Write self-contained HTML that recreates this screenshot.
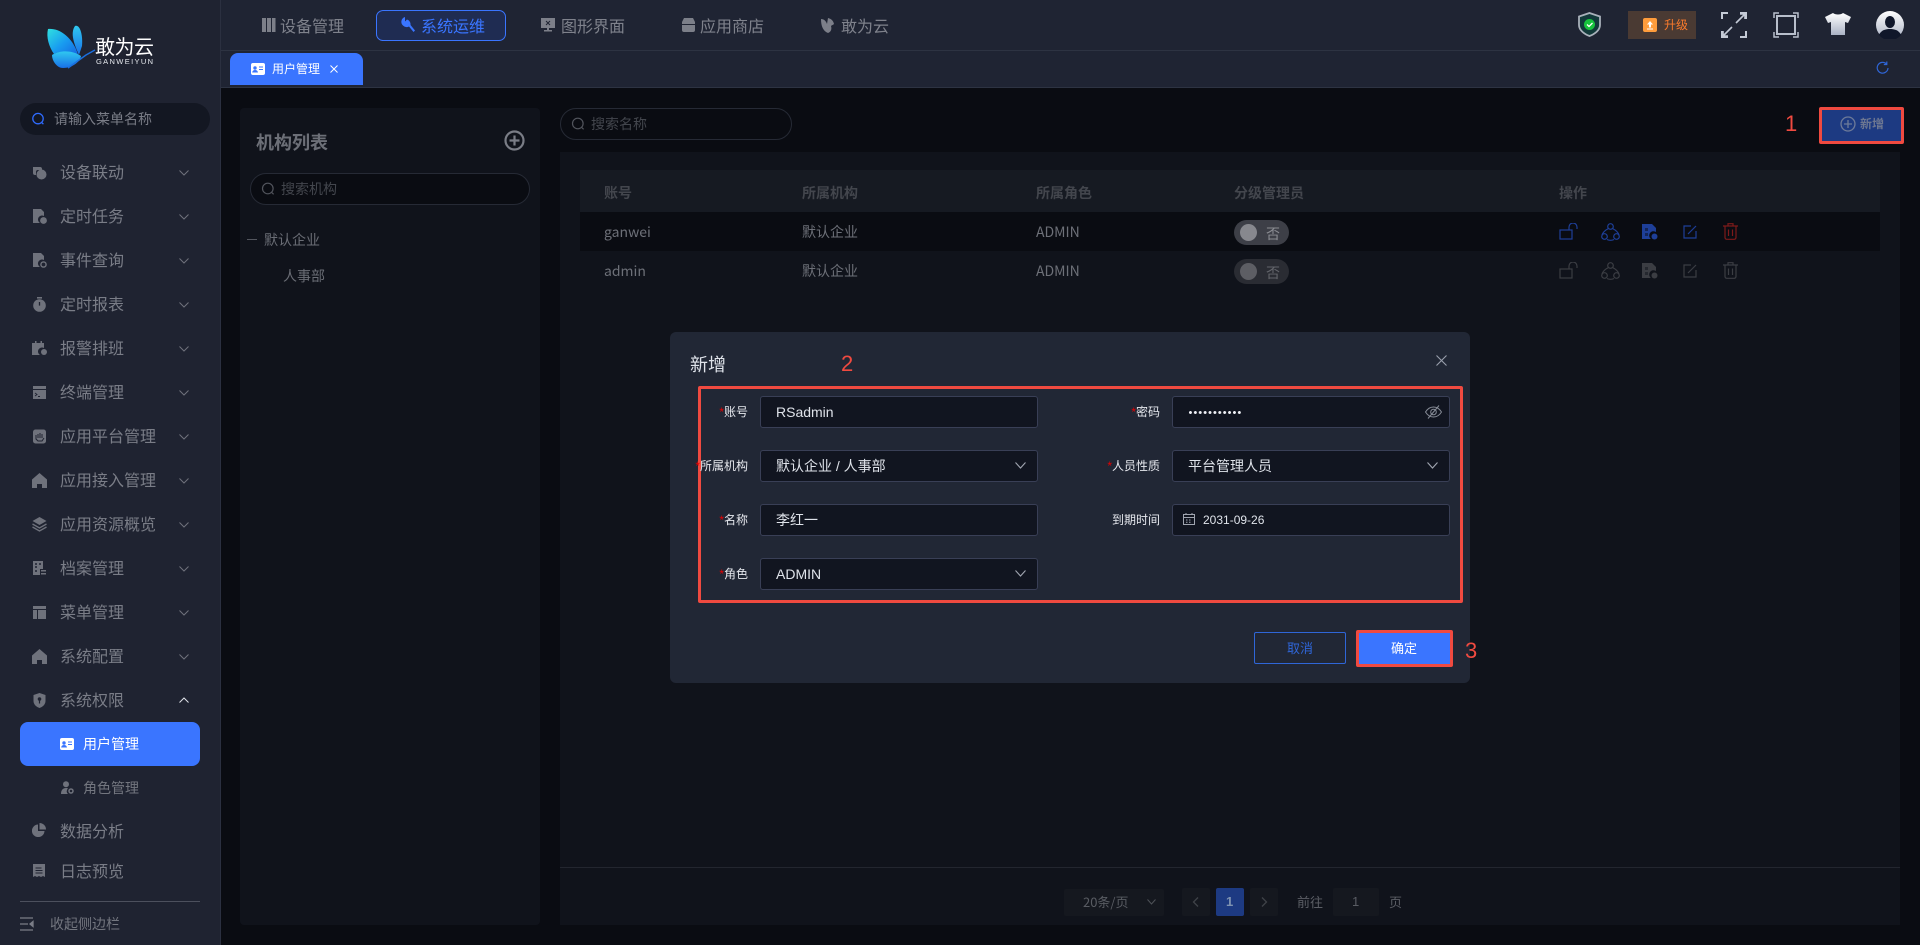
<!DOCTYPE html>
<html lang="zh"><head><meta charset="utf-8"><title>用户管理</title>
<style>
*{box-sizing:border-box;margin:0;padding:0}
html,body{width:1920px;height:945px;overflow:hidden;background:#0a0c12;font-family:"Liberation Sans","Noto Sans CJK SC",sans-serif}
.a{position:absolute}
.t{position:absolute;white-space:nowrap;line-height:20px}
.cj{font-family:"Noto Sans CJK SC",sans-serif}
.m{left:60px;font-size:16px;color:#7a7d87;font-family:"Noto Sans CJK SC",sans-serif;line-height:24px}
.ic{position:absolute;left:32px;width:15px;height:15px}
.ch{position:absolute;left:179px;width:10px;height:6px}
.n{font-size:16px;color:#7f828c;top:15px;font-family:"Noto Sans CJK SC",sans-serif}
.th{font-size:14px;font-weight:700;color:#43464d;top:183px;font-family:"Noto Sans CJK SC",sans-serif}
.td{font-size:14px;color:#6d7078;font-family:"Noto Sans CJK SC",sans-serif}
.inp{position:absolute;height:32px;background:#111520;border:1px solid #393f56;border-radius:3px;width:278px}
.val{position:absolute;font-size:14px;color:#dfe3ea;line-height:20px;white-space:nowrap}
.lab{position:absolute;font-size:12px;color:#e6e8ee;text-align:right;white-space:nowrap;line-height:20px;width:90px}
.lab i{color:#e60000;font-style:normal}
.red{color:#f04a40;font-size:22px;line-height:26px;position:absolute}
.pg{position:absolute;top:888px;height:28px;width:28px;background:#15181f;border-radius:2px}
</style></head><body>

<!-- sidebar -->
<div class="a" style="left:0;top:0;width:221px;height:945px;background:#1f2331;border-right:1px solid #2b3040"></div>
<svg class="a" style="left:44px;top:20px" width="60" height="54" viewBox="44 20 60 54">
<defs><linearGradient id="g1" x1="0" y1="0" x2="1" y2="1"><stop offset="0" stop-color="#2fe0e0"/><stop offset=".5" stop-color="#189cf0"/><stop offset="1" stop-color="#1560e0"/></linearGradient>
<linearGradient id="g2" x1="0" y1="0" x2="0" y2="1"><stop offset="0" stop-color="#30c8f0"/><stop offset="1" stop-color="#1870e8"/></linearGradient></defs>
<path d="M48 29C59 28 70 36 76 49L79 57C70 51 59 51 54 54C49 47 46 37 48 29Z" fill="url(#g1)"/>
<path d="M75 26C80 24 83 35 82 46L79 55C74 44 70 33 75 26Z" fill="url(#g2)"/>
<path d="M52 55C60 50 72 50 81 56C80 62 72 68 63 68C57 68 52 61 52 55Z" fill="url(#g2)"/>
<path d="M68 68L86 55L95 50" stroke="#1a6fe0" stroke-width="1.4" fill="none"/>
</svg>
<div class="t cj" style="left:95px;top:33px;font-size:20px;line-height:26px;color:#fff;letter-spacing:-.5px">敢为云</div>
<div class="t" style="left:96px;top:57px;font-size:7.5px;line-height:10px;color:#e6e9ee;letter-spacing:1.35px">GANWEIYUN</div>

<div class="a" style="left:20px;top:103px;width:190px;height:32px;background:#131722;border-radius:16px"></div>
<svg class="a" style="left:31px;top:112px" width="14" height="14" viewBox="0 0 14 14" fill="none" stroke="#2f6bff" stroke-width="1.3"><circle cx="7" cy="6.6" r="5.2"/><path d="M10.8 10.6l1.6 1.6"/></svg>
<div class="t cj" style="left:54px;top:109px;font-size:14px;color:#797c86">请输入菜单名称</div>

<svg class="ic" style="top:165px" viewBox="0 0 15 15" fill="#6f727c"><path d="M1 2h7a2 2 0 0 1 2 2v1H6a2 2 0 0 0-2 2v3H3a2 2 0 0 1-2-2z"/><circle cx="9.5" cy="9.5" r="5"/></svg>
<div class="t m" style="top:159px">设备联动</div>
<svg class="ic" style="top:209px" viewBox="0 0 15 15" fill="#6f727c"><path d="M1 0h8l3 3v4a4 4 0 0 0-4 7H1z"/><circle cx="11.5" cy="11.5" r="3.4"/></svg>
<div class="t m" style="top:203px">定时任务</div>
<svg class="ic" style="top:253px" viewBox="0 0 15 15" fill="#6f727c"><path d="M1 0h8l3 3v4a4 4 0 0 0-4 7H1z"/><circle cx="11.5" cy="11.5" r="2.6" fill="none" stroke="#6f727c" stroke-width="1.4"/></svg>
<div class="t m" style="top:247px">事件查询</div>
<svg class="ic" style="top:297px" viewBox="0 0 15 15" fill="#6f727c"><circle cx="7.5" cy="8.5" r="6.3"/><rect x="5" y="0" width="5" height="1.6"/><path d="M7.5 5v3.6" stroke="#1f2331" stroke-width="1.3"/></svg>
<div class="t m" style="top:291px">定时报表</div>
<svg class="ic" style="top:341px" viewBox="0 0 15 15" fill="#6f727c"><path d="M0 2h3V0h1.5v2h4V0H10v2h2v5a4 4 0 0 0-4 7H0z"/><circle cx="12" cy="11" r="3"/></svg>
<div class="t m" style="top:335px">报警排班</div>
<svg class="ic" style="top:385px" viewBox="0 0 15 15" fill="#6f727c"><path d="M1 1h13v3H1zM1 5h13v9H1z"/><path d="M3 8l2 1.5L3 11M6 11.5h2" stroke="#1f2331" stroke-width=".9" fill="none"/></svg>
<div class="t m" style="top:379px">终端管理</div>
<svg class="ic" style="top:429px" viewBox="0 0 15 15"><rect x="1" y="0.5" width="13" height="14" rx="2.5" fill="#6f727c"/><path d="M4 6v4l2 2h4l2-3M6 5v4M8 4v5M10 5v4" stroke="#1f2331" stroke-width="1" fill="none"/></svg>
<div class="t m" style="top:423px">应用平台管理</div>
<svg class="ic" style="top:473px" viewBox="0 0 15 15" fill="#6f727c"><path d="M7.5 0L15 6.500V15H10V11H5v4H0V6.500z"/></svg>
<div class="t m" style="top:467px">应用接入管理</div>
<svg class="ic" style="top:517px" viewBox="0 0 15 15" fill="#6f727c"><path d="M7.500 0l7 4-7 4-7-4z"/><path d="M.5 7l7 4 7-4M.5 10l7 4 7-4" fill="none" stroke="#6f727c" stroke-width="1.300"/></svg>
<div class="t m" style="top:511px">应用资源概览</div>
<svg class="ic" style="top:561px" viewBox="0 0 15 15" fill="#6f727c"><path d="M1 0h10v8H8v6H1z"/><rect x="9" y="9" width="5" height="1.500"/><rect x="9" y="12" width="5" height="1.500"/><path d="M3 3h2M7 3h2M3 6h2M3 10h2" stroke="#1f2331" stroke-width="1.400"/></svg>
<div class="t m" style="top:555px">档案管理</div>
<svg class="ic" style="top:605px" viewBox="0 0 15 15" fill="#6f727c"><path d="M1 1h13v3H1zM1 5h4v9H1zM6 5h8v9H6z"/></svg>
<div class="t m" style="top:599px">菜单管理</div>
<svg class="ic" style="top:649px" viewBox="0 0 15 15" fill="#6f727c"><path d="M7.500 0L15 6.500V15H10V11H5v4H0V6.500z"/></svg>
<div class="t m" style="top:643px">系统配置</div>
<svg class="ic" style="top:693px" viewBox="0 0 15 15" fill="#6f727c"><path d="M7.500 0L13.500 2V8c0 3.500-3 6-6 7-3-1-6-3.500-6-7V2z"/><circle cx="7.500" cy="6" r="1.800" fill="#1f2331"/><path d="M7.500 7v3.500" stroke="#1f2331" stroke-width="1.200"/></svg>
<div class="t m" style="top:687px">系统权限</div>

<svg class="ch" style="top:170px" viewBox="0 0 10 6" fill="none" stroke="#6f727c"><path d="M.5.5L5 5 9.500.5"/></svg>
<svg class="ch" style="top:214px" viewBox="0 0 10 6" fill="none" stroke="#6f727c"><path d="M.5.5L5 5 9.500.5"/></svg>
<svg class="ch" style="top:258px" viewBox="0 0 10 6" fill="none" stroke="#6f727c"><path d="M.5.5L5 5 9.500.5"/></svg>
<svg class="ch" style="top:302px" viewBox="0 0 10 6" fill="none" stroke="#6f727c"><path d="M.5.5L5 5 9.500.5"/></svg>
<svg class="ch" style="top:346px" viewBox="0 0 10 6" fill="none" stroke="#6f727c"><path d="M.5.5L5 5 9.500.5"/></svg>
<svg class="ch" style="top:390px" viewBox="0 0 10 6" fill="none" stroke="#6f727c"><path d="M.5.5L5 5 9.500.5"/></svg>
<svg class="ch" style="top:434px" viewBox="0 0 10 6" fill="none" stroke="#6f727c"><path d="M.5.5L5 5 9.500.5"/></svg>
<svg class="ch" style="top:478px" viewBox="0 0 10 6" fill="none" stroke="#6f727c"><path d="M.5.5L5 5 9.500.5"/></svg>
<svg class="ch" style="top:522px" viewBox="0 0 10 6" fill="none" stroke="#6f727c"><path d="M.5.5L5 5 9.500.5"/></svg>
<svg class="ch" style="top:566px" viewBox="0 0 10 6" fill="none" stroke="#6f727c"><path d="M.5.5L5 5 9.500.5"/></svg>
<svg class="ch" style="top:610px" viewBox="0 0 10 6" fill="none" stroke="#6f727c"><path d="M.5.5L5 5 9.500.5"/></svg>
<svg class="ch" style="top:654px" viewBox="0 0 10 6" fill="none" stroke="#6f727c"><path d="M.5.5L5 5 9.500.5"/></svg>
<svg class="ch" style="top:697px" viewBox="0 0 10 6" fill="none" stroke="#dfe2e8"><path d="M.5 5.500L5 1l4.500 4.500"/></svg>

<div class="a" style="left:20px;top:722px;width:180px;height:44px;background:#3a75ff;border-radius:8px"></div>
<svg class="a" style="left:60px;top:738px" width="14" height="12" viewBox="0 0 14 12"><rect width="14" height="12" rx="2" fill="#fff"/><circle cx="4" cy="5" r="1.700" fill="#3a75ff"/><path d="M1.800 9c.5-2 4-2 4.500 0zM8 4h4M8 6.500h4" stroke="#3a75ff" fill="#3a75ff"/></svg>
<div class="t cj" style="left:83px;top:734px;font-size:14px;color:#fff;line-height:20px">用户管理</div>
<svg class="a" style="left:61px;top:781px" width="13" height="13" viewBox="0 0 13 13" fill="#6f727c"><circle cx="5" cy="3.200" r="3"/><path d="M0 13c0-4 2-6 5-6 1 0 1.600.2 2 .5A3.500 3.500 0 0 0 7 13z"/><circle cx="10" cy="10" r="2" fill="none" stroke="#6f727c" stroke-width="1.500"/></svg>
<div class="t cj" style="left:83px;top:778px;font-size:14px;color:#73767f">角色管理</div>

<svg class="ic" style="top:823px;width:14px;height:14px" viewBox="0 0 14 14" fill="#6f727c"><path d="M6 1.500V8h6.500A6.300 6.300 0 1 1 6 1.500z"/><path d="M7.500 0A6.500 6.500 0 0 1 14 6.500H7.500z"/></svg>
<div class="t m" style="top:818px">数据分析</div>
<svg class="ic" style="top:863px" viewBox="0 0 15 15" fill="#6f727c"><path d="M1 1h12v13l-2-1-2 1-2-1-2 1-2-1-2 1z"/><path d="M3.500 5h6M3.500 7.500h7M3.500 10h7" stroke="#1f2331" stroke-width="1"/></svg>
<div class="t m" style="top:858px">日志预览</div>
<div class="a" style="left:20px;top:901px;width:180px;height:1px;background:#4c505d"></div>
<svg class="a" style="left:20px;top:917px" width="14" height="14" viewBox="0 0 14 14" fill="none" stroke="#7a7d87" stroke-width="1.300"><path d="M0 1h13M0 7h8M0 13h13"/><path d="M13 4.500L10 7l3 2.500z" fill="#7a7d87"/></svg>
<div class="t cj" style="left:50px;top:914px;font-size:14px;color:#73767f">收起侧边栏</div>

<!-- top bar -->
<div class="a" style="left:221px;top:0;width:1699px;height:88px;background:#1f2433"></div>
<div class="a" style="left:221px;top:50px;width:1699px;height:1px;background:#2d3342"></div>
<div class="a" style="left:221px;top:87px;width:1699px;height:1px;background:#2d3342"></div>
<div class="a" style="left:376px;top:10px;width:130px;height:31px;background:#1f2c52;border:1px solid #3a75ff;border-radius:7px"></div>
<svg class="a" style="left:262px;top:18px" width="14" height="14" viewBox="0 0 14 14" fill="#7c7f89"><rect x="0" y="0" width="4" height="14"/><rect x="5" y="0" width="4" height="14"/><rect x="10" y="0" width="3.500" height="14"/></svg>
<div class="t n" style="left:280px">设备管理</div>
<svg class="a" style="left:401px;top:17px" width="14" height="16" viewBox="0 0 14 16" fill="#3a75ff"><path d="M4 0a5 5 0 0 0-2 8.500A5 5 0 0 0 8 9.500L12.500 15l1.500-1.500L9.500 8A5 5 0 0 0 6 2.500L4 4.500z"/></svg>
<div class="t n" style="left:421px;color:#3a75ff">系统运维</div>
<svg class="a" style="left:541px;top:18px" width="14" height="14" viewBox="0 0 14 14" fill="#7c7f89"><path d="M0 0h14v10H8v2h3v1.500H3V12h3v-2H0z"/><path d="M5 3l4 4M9 3L5 7" stroke="#1f2433"/></svg>
<div class="t n" style="left:561px">图形界面</div>
<svg class="a" style="left:682px;top:18px" width="13" height="14" viewBox="0 0 13 14" fill="#7c7f89"><path d="M2 0h9l2 4v2H0V4zM0 7h13v5a2 2 0 0 1-2 2H2a2 2 0 0 1-2-2z"/></svg>
<div class="t n" style="left:700px">应用商店</div>
<svg class="a" style="left:821px;top:18px" width="15" height="15" viewBox="0 0 15 15" fill="#7c7f89"><path d="M0 1c3 0 5 2 6 5l1-6c3 1 5 2 6 6-1 1-2 1-3 2 1 3 0 6-3 7C2 13 0 8 0 1z"/></svg>
<div class="t n" style="left:841px">敢为云</div>

<svg class="a" style="left:1578px;top:12px" width="23" height="25" viewBox="0 0 23 25"><path d="M11.500 1L22 4.500V13c0 5-5 9-10.500 11C6 22 1 18 1 13V4.500z" fill="#123a3a" stroke="#a8b0ba" stroke-width="1.800"/><circle cx="11.500" cy="12.500" r="5.500" fill="#16c43c"/><path d="M9 12.500l2 2 3.500-3.500" stroke="#fff" stroke-width="1.300" fill="none"/></svg>
<div class="a" style="left:1628px;top:11px;width:68px;height:28px;background:#4a3a33"></div>
<svg class="a" style="left:1643px;top:18px" width="14" height="14" viewBox="0 0 14 14"><rect width="14" height="14" rx="2" fill="#ff9d3c"/><path d="M7 3l3 3.500H8v3H6v-3H4zM4 10.500h6v1H4z" fill="#fff"/></svg>
<div class="t cj" style="left:1664px;top:15px;font-size:12px;color:#f97a2c">升级</div>
<svg class="a" style="left:1721px;top:12px" width="26" height="26" viewBox="0 0 26 26" fill="none" stroke="#c4cad6" stroke-width="2"><path d="M1 7V1h6M19 1h6v6M25 19v6h-6M7 25H1v-6"/><path d="M15 11l9-9M24 2h-5M24 2v5M11 15l-9 9M2 24h5M2 24v-5" stroke-width="1.600"/></svg>
<svg class="a" style="left:1773px;top:12px" width="26" height="26" viewBox="0 0 26 26" fill="none" stroke="#b8bfcc" stroke-width="2"><rect x="4" y="4" width="18" height="18"/><path d="M1 6V1h5M20 1h5v5M25 20v5h-5M6 25H1v-5" stroke-width="1.500"/></svg>
<svg class="a" style="left:1825px;top:12px" width="26" height="24" viewBox="0 0 26 24"><defs><linearGradient id="g3" x1="0" y1="0" x2="0" y2="1"><stop offset="0" stop-color="#fff"/><stop offset="1" stop-color="#aab2c4"/></linearGradient></defs><path d="M8 1c2 2 8 2 10 0l8 4-3 6-3-1v13H6V10l-3 1-3-6z" fill="url(#g3)"/></svg>
<svg class="a" style="left:1876px;top:11px" width="28" height="28" viewBox="0 0 28 28"><defs><linearGradient id="g4" x1="0" y1="0" x2="0" y2="1"><stop offset="0" stop-color="#fff"/><stop offset="1" stop-color="#aab2c4"/></linearGradient></defs><circle cx="14" cy="14" r="14" fill="url(#g4)"/><ellipse cx="14" cy="11" rx="5" ry="6" fill="#10172a"/><path d="M3 24c2-5 7-6 11-6s9 1 11 6a14 14 0 0 1-22 0z" fill="#10172a"/></svg>

<div class="a" style="left:230px;top:53px;width:133px;height:32px;background:#3a75ff;border-radius:8px 8px 0 0"></div>
<svg class="a" style="left:251px;top:63px" width="14" height="12" viewBox="0 0 14 12"><rect width="14" height="12" rx="2" fill="#fff"/><circle cx="4" cy="5" r="1.700" fill="#3a75ff"/><path d="M1.800 9c.5-2 4-2 4.500 0zM8 4h4M8 6.500h4" stroke="#3a75ff" fill="#3a75ff"/></svg>
<div class="t cj" style="left:272px;top:59px;font-size:12px;color:#fff">用户管理</div>
<svg class="a" style="left:330px;top:65px" width="8" height="8" viewBox="0 0 8 8" stroke="#fff"><path d="M.5.5l7 7M7.500.5l-7 7"/></svg>
<svg class="a" style="left:1876px;top:61px" width="13" height="13" viewBox="0 0 13 13" fill="none" stroke="#2f66d8" stroke-width="1.200"><path d="M10.500 3A5.400 5.400 0 1 0 12 7"/><path d="M10.800.500v3h-3"/></svg>

<!-- org panel -->
<div class="a" style="left:240px;top:108px;width:300px;height:817px;background:#10131b;border-radius:4px"></div>
<div class="t cj" style="left:256px;top:130px;font-size:18px;font-weight:700;color:#6c6f77;line-height:24px">机构列表</div>
<svg class="a" style="left:504px;top:130px" width="21" height="21" viewBox="0 0 21 21" fill="none" stroke="#7a7d86" stroke-width="2.200"><circle cx="10.500" cy="10.500" r="9"/><path d="M10.500 5.500v10M5.500 10.500h10"/></svg>
<div class="a" style="left:250px;top:173px;width:280px;height:32px;background:#0a0c12;border:1px solid #262a35;border-radius:16px"></div>
<svg class="a" style="left:261px;top:182px" width="14" height="14" viewBox="0 0 14 14" fill="none" stroke="#52555d" stroke-width="1.200"><circle cx="6.800" cy="6.500" r="5.300"/><path d="M10.800 10.500l1.800 1.800"/></svg>
<div class="t cj" style="left:281px;top:179px;font-size:14px;color:#43464d">搜索机构</div>
<div class="a" style="left:247px;top:239px;width:10px;height:1px;background:#53565e"></div>
<div class="t cj" style="left:264px;top:230px;font-size:14px;color:#6a6d75">默认企业</div>
<div class="t cj" style="left:283px;top:266px;font-size:14px;color:#6a6d75">人事部</div>

<!-- main -->
<div class="a" style="left:560px;top:108px;width:232px;height:32px;background:#0a0c12;border:1px solid #262a35;border-radius:16px"></div>
<svg class="a" style="left:571px;top:117px" width="14" height="14" viewBox="0 0 14 14" fill="none" stroke="#52555d" stroke-width="1.200"><circle cx="6.800" cy="6.500" r="5.300"/><path d="M10.800 10.500l1.800 1.800"/></svg>
<div class="t cj" style="left:591px;top:114px;font-size:14px;color:#43464d">搜索名称</div>
<div class="red" style="left:1785px;top:111px">1</div>
<div class="a" style="left:1819px;top:107px;width:85px;height:37px;background:#1d3a82;border:3px solid #f04a40;border-radius:2px"></div>
<svg class="a" style="left:1840px;top:116px" width="16" height="16" viewBox="0 0 16 16" fill="none" stroke="#6d7a99" stroke-width="1.300"><circle cx="8" cy="8" r="7"/><path d="M8 4v8M4 8h8"/></svg>
<div class="t cj" style="left:1860px;top:114px;font-size:12px;font-weight:700;color:#6d7791">新增</div>

<div class="a" style="left:560px;top:152px;width:1340px;height:773px;background:#10131b"></div>
<div class="a" style="left:580px;top:170px;width:1300px;height:42px;background:#161a22"></div>
<div class="a" style="left:580px;top:212px;width:1300px;height:39px;background:#0a0c12"></div>
<div class="t th" style="left:604px">账号</div>
<div class="t th" style="left:802px">所属机构</div>
<div class="t th" style="left:1036px">所属角色</div>
<div class="t th" style="left:1234px">分级管理员</div>
<div class="t th" style="left:1559px">操作</div>
<div class="t td" style="left:604px;top:222px">ganwei</div>
<div class="t td" style="left:802px;top:222px">默认企业</div>
<div class="t td" style="left:1036px;top:222px">ADMIN</div>
<div class="t td" style="left:604px;top:261px">admin</div>
<div class="t td" style="left:802px;top:261px">默认企业</div>
<div class="t td" style="left:1036px;top:261px">ADMIN</div>

<div class="a" style="left:1234px;top:220px;width:55px;height:25px;background:#3d3f47;border-radius:13px"></div>
<div class="a" style="left:1240px;top:224px;width:17px;height:17px;background:#87888e;border-radius:50%"></div>
<div class="t cj" style="left:1266px;top:224px;font-size:14px;color:#8a8c92">否</div>
<div class="a" style="left:1234px;top:259px;width:55px;height:25px;background:#2a2c33;border-radius:13px"></div>
<div class="a" style="left:1240px;top:263px;width:17px;height:17px;background:#5d5e64;border-radius:50%"></div>
<div class="t cj" style="left:1266px;top:263px;font-size:14px;color:#63656b">否</div>

<svg class="a" style="left:1559px;top:223px" width="20" height="18" viewBox="0 0 20 18" fill="none" stroke="#1e3f98" stroke-width="1.200"><rect x="1" y="7" width="12" height="9"/><path d="M10 7V4a4 4 0 0 1 8 0v2"/></svg>
<svg class="a" style="left:1601px;top:223px" width="19" height="18" viewBox="0 0 19 18" fill="none" stroke="#1e3f98" stroke-width="1.200"><circle cx="9.500" cy="3.500" r="2.800"/><circle cx="3.500" cy="13.500" r="2.800"/><circle cx="15.500" cy="13.500" r="2.800"/><path d="M7.500 5.500C4.500 7 2 9 1 12M11.500 5.500C14.500 7 17 9 18 12M6 16.500c2 1 5 1 7 0"/></svg>
<svg class="a" style="left:1642px;top:224px" width="16" height="16" viewBox="0 0 16 16" fill="#1e3f98"><path d="M0 0h10l4 4v4a4 4 0 0 0-5 7H0z"/><path d="M3 4h3v3H3zM3 9h3v3H3z" fill="#0a0c12" opacity=".5"/><circle cx="12.500" cy="12.500" r="3"/></svg>
<svg class="a" style="left:1682px;top:224px" width="16" height="16" viewBox="0 0 16 16" fill="none" stroke="#1e3f98" stroke-width="1.200"><path d="M9 2H2v12h12V7"/><path d="M6 10l8-8"/></svg>
<svg class="a" style="left:1723px;top:223px" width="15" height="17" viewBox="0 0 15 17" fill="none" stroke="#7d1a1a" stroke-width="1.200"><path d="M0 3h15M5 3V.7h5V3M2 3v11.500A1.800 1.800 0 0 0 3.800 16.300h7.400A1.800 1.800 0 0 0 13 14.500V3M5.500 6.500v6.500M9.500 6.500v6.500"/></svg>

<svg class="a" style="left:1559px;top:262px" width="20" height="18" viewBox="0 0 20 18" fill="none" stroke="#3b3d43" stroke-width="1.200"><rect x="1" y="7" width="12" height="9"/><path d="M10 7V4a4 4 0 0 1 8 0v2"/></svg>
<svg class="a" style="left:1601px;top:262px" width="19" height="18" viewBox="0 0 19 18" fill="none" stroke="#3b3d43" stroke-width="1.200"><circle cx="9.500" cy="3.500" r="2.800"/><circle cx="3.500" cy="13.500" r="2.800"/><circle cx="15.500" cy="13.500" r="2.800"/><path d="M7.500 5.500C4.500 7 2 9 1 12M11.500 5.500C14.500 7 17 9 18 12M6 16.500c2 1 5 1 7 0"/></svg>
<svg class="a" style="left:1642px;top:263px" width="16" height="16" viewBox="0 0 16 16" fill="#3b3d43"><path d="M0 0h10l4 4v4a4 4 0 0 0-5 7H0z"/><path d="M3 4h3v3H3zM3 9h3v3H3z" fill="#10131b" opacity=".5"/><circle cx="12.500" cy="12.500" r="3"/></svg>
<svg class="a" style="left:1682px;top:263px" width="16" height="16" viewBox="0 0 16 16" fill="none" stroke="#3b3d43" stroke-width="1.200"><path d="M9 2H2v12h12V7"/><path d="M6 10l8-8"/></svg>
<svg class="a" style="left:1723px;top:262px" width="15" height="17" viewBox="0 0 15 17" fill="none" stroke="#3b3d43" stroke-width="1.200"><path d="M0 3h15M5 3V.7h5V3M2 3v11.500A1.800 1.800 0 0 0 3.800 16.300h7.400A1.800 1.800 0 0 0 13 14.500V3M5.500 6.500v6.500M9.500 6.500v6.500"/></svg>

<div class="a" style="left:560px;top:867px;width:1340px;height:1px;background:#23262f"></div>
<div class="a" style="left:1064px;top:889px;width:100px;height:27px;background:#15181f;border-radius:2px"></div>
<div class="t cj" style="left:1083px;top:892px;font-size:13px;color:#595c63">20条/页</div>
<svg class="a" style="left:1147px;top:899px" width="9" height="6" viewBox="0 0 9 6" fill="none" stroke="#4f5258"><path d="M.5.500L4.500 5 8.500.5"/></svg>
<div class="pg" style="left:1182px"></div>
<svg class="a" style="left:1192px;top:897px" width="7" height="10" viewBox="0 0 7 10" fill="none" stroke="#3f4248" stroke-width="1.300"><path d="M6 .5L1.500 5 6 9.500"/></svg>
<div class="pg" style="left:1216px;background:#1d3a82"></div>
<div class="t" style="left:1226px;top:892px;font-size:13px;font-weight:700;color:#7f93b2">1</div>
<div class="pg" style="left:1250px"></div>
<svg class="a" style="left:1261px;top:897px" width="7" height="10" viewBox="0 0 7 10" fill="none" stroke="#3f4248" stroke-width="1.300"><path d="M1 .5L5.500 5 1 9.500"/></svg>
<div class="t cj" style="left:1297px;top:892px;font-size:13px;color:#5b5e65">前往</div>
<div class="pg" style="left:1333px;width:46px"></div>
<div class="t" style="left:1352px;top:892px;font-size:13px;color:#595c63">1</div>
<div class="t cj" style="left:1389px;top:892px;font-size:13px;color:#5b5e65">页</div>

<!-- dialog -->
<div class="a" style="left:670px;top:332px;width:800px;height:351px;background:#212735;border-radius:6px"></div>
<div class="t cj" style="left:690px;top:352px;font-size:18px;line-height:24px;color:#dfe3ea">新增</div>
<div class="red" style="left:841px;top:351px">2</div>
<svg class="a" style="left:1436px;top:355px" width="11" height="11" viewBox="0 0 11 11" stroke="#9aa0ac" stroke-width="1.100"><path d="M.5.500l10 10M10.500.5l-10 10"/></svg>
<div class="a" style="left:698px;top:386px;width:765px;height:217px;border:3px solid #f04a40;border-radius:2px"></div>

<div class="lab" style="left:658px;top:402px"><i>*</i>账号</div>
<div class="lab" style="left:658px;top:456px"><i>*</i>所属机构</div>
<div class="lab" style="left:658px;top:510px"><i>*</i>名称</div>
<div class="lab" style="left:658px;top:564px"><i>*</i>角色</div>
<div class="inp" style="left:760px;top:396px"></div>
<div class="inp" style="left:760px;top:450px"></div>
<div class="inp" style="left:760px;top:504px"></div>
<div class="inp" style="left:760px;top:558px"></div>
<div class="val" style="left:776px;top:402px">RSadmin</div>
<div class="val" style="left:776px;top:456px">默认企业 / 人事部</div>
<div class="val" style="left:776px;top:510px">李红一</div>
<div class="val" style="left:776px;top:564px">ADMIN</div>
<svg class="a" style="left:1015px;top:462px" width="11" height="7" viewBox="0 0 11 7" fill="none" stroke="#a0a5b0" stroke-width="1.100"><path d="M.5.500L5.500 6l5-5.500"/></svg>
<svg class="a" style="left:1015px;top:570px" width="11" height="7" viewBox="0 0 11 7" fill="none" stroke="#a0a5b0" stroke-width="1.100"><path d="M.5.500L5.500 6l5-5.500"/></svg>

<div class="lab" style="left:1070px;top:402px"><i>*</i>密码</div>
<div class="lab" style="left:1070px;top:456px"><i>*</i>人员性质</div>
<div class="lab" style="left:1070px;top:510px">到期时间</div>
<div class="inp" style="left:1172px;top:396px"></div>
<div class="inp" style="left:1172px;top:450px"></div>
<div class="inp" style="left:1172px;top:504px"></div>
<div class="a" style="left:1188px;top:411px;width:54px;height:3px;background-image:radial-gradient(circle,#eef0f5 1.400px,transparent 1.500px);background-size:4.900px 3px"></div>
<svg class="a" style="left:1425px;top:405px" width="17" height="14" viewBox="0 0 17 14" fill="none" stroke="#868b96" stroke-width="1"><path d="M.5 7C3 3 6 2 8.500 2s5.500 1 8 5c-2.500 4-5.500 5-8 5S3 11 .5 7z"/><circle cx="8.500" cy="7" r="2.800"/><path d="M14 .5L3 13.500"/></svg>
<div class="val" style="left:1188px;top:456px">平台管理人员</div>
<svg class="a" style="left:1427px;top:462px" width="11" height="7" viewBox="0 0 11 7" fill="none" stroke="#a0a5b0" stroke-width="1.100"><path d="M.5.500L5.500 6l5-5.500"/></svg>
<svg class="a" style="left:1183px;top:513px" width="12" height="12" viewBox="0 0 12 12" fill="none" stroke="#a0a5b0"><rect x=".5" y="1.500" width="11" height="10"/><path d="M.5 4.500h11M3 0v2M9 0v2M3 7h1.500M6 7h1.500M3 9.300h1.500M6 9.300h1.500" stroke-width="1"/></svg>
<div class="val" style="left:1203px;top:510px;font-size:12px">2031-09-26</div>

<div class="a" style="left:1254px;top:632px;width:92px;height:32px;border:1px solid #2f66d8;border-radius:2px"></div>
<div class="t cj" style="left:1287px;top:638px;font-size:13px;color:#2f66d8">取消</div>
<div class="a" style="left:1356px;top:630px;width:97px;height:37px;background:#3a75ff;border:3px solid #f04a40;border-radius:2px"></div>
<div class="t cj" style="left:1391px;top:638px;font-size:13px;color:#fff">确定</div>
<div class="red" style="left:1465px;top:638px;">3</div>
</body></html>
